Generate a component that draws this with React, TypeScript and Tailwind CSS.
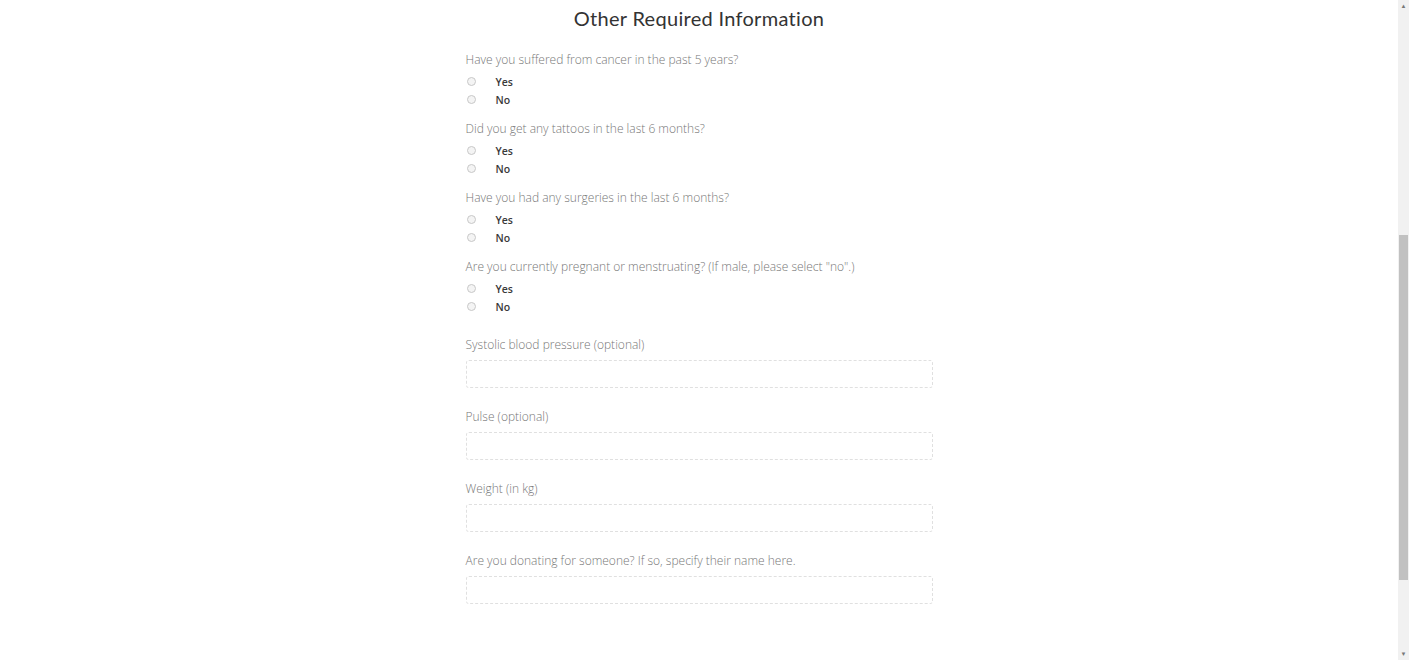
const questions = [
  "Have you suffered from cancer in the past 5 years?",
  "Did you get any tattoos in the last 6 months?",
  "Have you had any surgeries in the last 6 months?",
  'Are you currently pregnant or menstruating? (If male, please select "no".)',
];

const fields = [
  "Systolic blood pressure (optional)",
  "Pulse (optional)",
  "Weight (in kg)",
  "Are you donating for someone? If so, specify their name here.",
];

function Radio({ label }: { label: string }) {
  return (
    <label className="flex h-[18px] items-center">
      <span className="mb-[3px] ml-[1px] h-[9px] w-[9px] rounded-full border border-[#c8c8c8] bg-[#f4f4f4]" />
      <span className="ml-[20px] text-[10.5px] font-semibold text-[#3a3a3a]">
        {label}
      </span>
    </label>
  );
}

export default function App() {
  return (
    <div className="flex h-[660px] w-[1409px] overflow-hidden bg-white font-['Open_Sans',sans-serif]">
      <main className="flex flex-1 flex-col items-center">
        <h1 className="mt-[3px] font-['Lato',sans-serif] text-[20px] tracking-[0.3px] text-[#333]">
          Other Required Information
        </h1>

        <div className="mt-[18px] w-[467px]">
          {questions.map((q) => (
            <div key={q} className="mb-[10px]">
              <p className="h-[23px] text-[12px] font-light leading-[18px] text-[#777]">
                {q}
              </p>
              <Radio label="Yes" />
              <Radio label="No" />
            </div>
          ))}

          <div className="mt-[19px]">
            {fields.map((f) => (
              <div key={f} className="mb-[20px]">
                <p className="h-[24px] text-[12px] font-light leading-[18px] text-[#777]">
                  {f}
                </p>
                <div className="h-[28px] rounded-[3px] border border-dashed border-[#e0e0e0]" />
              </div>
            ))}
          </div>
        </div>
      </main>

      <div className="flex w-[11px] flex-col items-center bg-[#f1f1f1]">
        <span className="mt-[3px] text-[6px] leading-none text-[#777]">▲</span>
        <div className="mt-[226px] h-[345px] w-[9px] bg-[#c1c1c1]" />
        <span className="mt-auto mb-[3px] text-[6px] leading-none text-[#777]">▼</span>
      </div>
    </div>
  );
}
